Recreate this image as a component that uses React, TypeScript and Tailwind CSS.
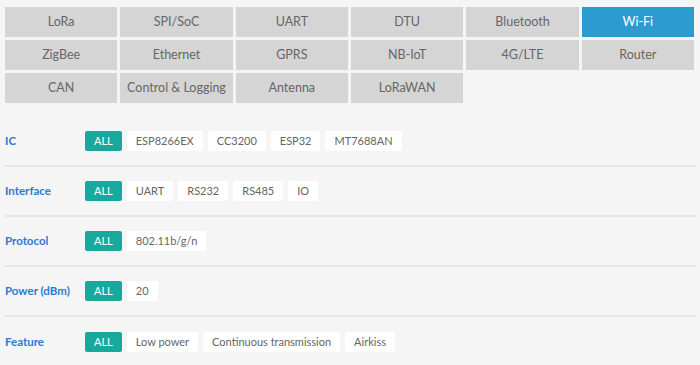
import React from "react";

const tabs = [
  "LoRa", "SPI/SoC", "UART", "DTU", "Bluetooth", "Wi-Fi",
  "ZigBee", "Ethernet", "GPRS", "NB-IoT", "4G/LTE", "Router",
  "CAN", "Control & Logging", "Antenna", "LoRaWAN",
];

const filters: { label: string; items: string[] }[] = [
  { label: "IC", items: ["ESP8266EX", "CC3200", "ESP32", "MT7688AN"] },
  { label: "Interface", items: ["UART", "RS232", "RS485", "IO"] },
  { label: "Protocol", items: ["802.11b/g/n"] },
  { label: "Power (dBm)", items: ["20"] },
  { label: "Feature", items: ["Low power", "Continuous transmission", "Airkiss"] },
];

export default function App() {
  return (
    <div
      className="w-[700px] h-[365px] overflow-hidden bg-[#f5f5f5]"
      style={{ fontFamily: 'Lato, "Open Sans", sans-serif' }}
    >
      <div className="grid grid-cols-6 gap-[3px] pt-[7px] pl-[5px] pr-[6px]">
        {tabs.map((t) => (
          <div
            key={t}
            className={
              t === "Wi-Fi"
                ? "h-[30px] flex items-center justify-center bg-[#2b9bd0] text-white text-[12.5px]"
                : "h-[30px] flex items-center justify-center bg-[#d5d5d5] text-[#666666] text-[12.5px]"
            }
          >
            {t}
          </div>
        ))}
      </div>
      <div className="mt-[14px] ml-[5px] mr-[4px]">
        {filters.map((f, i) => (
          <div
            key={f.label}
            className={
              i < filters.length - 1
                ? "h-[50px] flex items-center border-b-2 border-[#e5e5e5]"
                : "h-[50px] flex items-center"
            }
          >
            <div className="w-[80px] text-[11.5px] font-bold text-[#2a7ad4]">{f.label}</div>
            <div className="flex gap-[5px]">
              <span className="h-[20px] px-[9px] flex items-center rounded-[2px] bg-[#17a99b] text-white text-[11px]">
                ALL
              </span>
              {f.items.map((it) => (
                <span
                  key={it}
                  className="h-[20px] px-[9px] flex items-center rounded-[2px] bg-white text-[#666666] text-[11px]"
                >
                  {it}
                </span>
              ))}
            </div>
          </div>
        ))}
      </div>
    </div>
  );
}
